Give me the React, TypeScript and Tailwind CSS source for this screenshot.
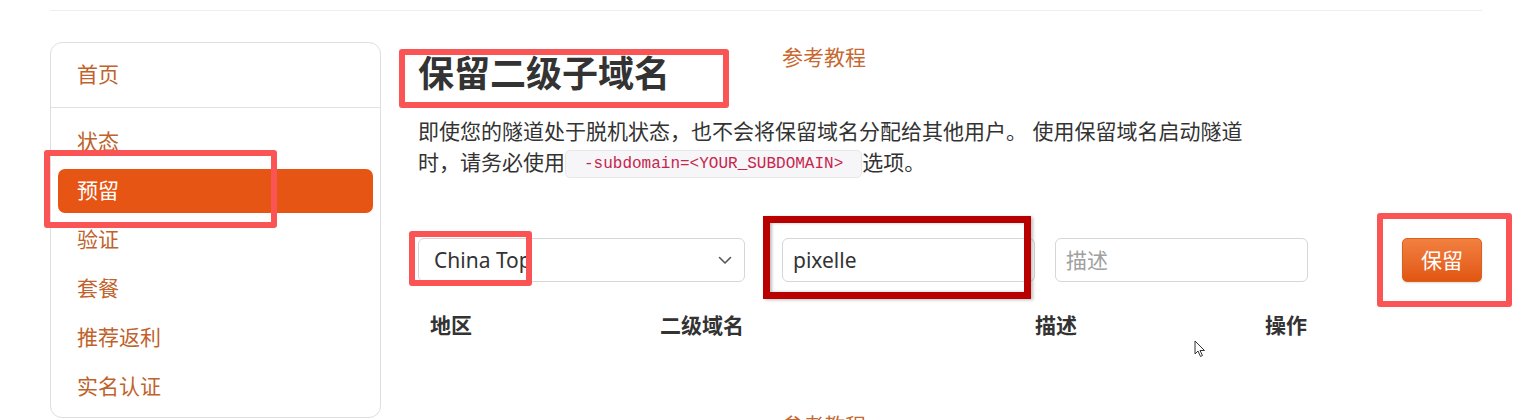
import React from "react";

const navItems = ["状态", "预留", "验证", "套餐", "推荐返利", "实名认证"];

export default function App() {
  return (
    <div
      className="relative w-[1524px] h-[420px] overflow-hidden bg-white text-[#333]"
      style={{ fontFamily: '"Noto Sans", "Noto Sans CJK SC", sans-serif' }}
    >
      <div className="pt-[10px] pl-[50px]">
        <div className="w-[1432px] border-t border-[#eeeeee]" />
      </div>

      <div className="flex pl-[50px] mt-[31px]">
        {/* Sidebar */}
        <div className="w-[331px] h-[376px] shrink-0 rounded-[12px] border border-[#dedede]">
          <div className="h-[65px] flex items-center pl-[26px] border-b border-[#e2e2e2] text-[21px] text-[#c0622b]">
            首页
          </div>
          <div className="px-[7px] pt-[9px]">
            {navItems.map((t) =>
              t === "预留" ? (
                <div
                  key={t}
                  className="h-[44px] my-[2.5px] flex items-center pl-[19px] rounded-[7px] bg-[#e75515] text-white text-[21px]"
                >
                  {t}
                </div>
              ) : (
                <div
                  key={t}
                  className="h-[49px] flex items-center pl-[19px] text-[21px] text-[#c0622b]"
                >
                  {t}
                </div>
              )
            )}
          </div>
        </div>

        {/* Main */}
        <div className="ml-[37px] w-[1064px] flex flex-col">
          <div className="flex items-start h-[74px]">
            <h1 className="w-[364px] mt-[10px] text-[36px] leading-[44px] font-bold text-[#333]">
              保留二级子域名
            </h1>
            <div className="mt-[1px] text-[21px] leading-[28px] text-[#c8672f]">参考教程</div>
          </div>

          <p className="w-[835px] text-[21px] leading-[31px] text-[#333]">
            即使您的隧道处于脱机状态，也不会将保留域名分配给其他用户。 使用保留域名启动隧道时，请务必使用
            <code
              className="inline-block align-middle px-[18px] h-[28px] leading-[26px] rounded-[5px] border border-[#e8e8ea] bg-[#f6f6f8] text-[16px] text-[#c7254e]"
              style={{ fontFamily: '"Liberation Mono", monospace' }}
            >
              -subdomain=&lt;YOUR_SUBDOMAIN&gt;
            </code>
            选项。
          </p>

          {/* Form row */}
          <div className="flex items-center mt-[60px] h-[44px]">
            <div className="w-[327px] h-[44px] flex items-center justify-between pl-[15px] pr-[12px] rounded-[6px] border border-[#d6d6d6] text-[21px] text-[#333]">
              <span>China Top</span>
              <svg width="14" height="9" viewBox="0 0 14 9" fill="none">
                <path d="M1.5 1.5 L7 7 L12.5 1.5" stroke="#555" strokeWidth="1.6" strokeLinecap="round" strokeLinejoin="round" />
              </svg>
            </div>
            <div className="ml-[37px] w-[253px] h-[44px] flex items-center pl-[10px] rounded-[6px] border border-[#d6d6d6] text-[21px] text-[#333]">
              pixelle
            </div>
            <div className="ml-[20px] w-[253px] h-[44px] flex items-center pl-[10px] rounded-[6px] border border-[#d6d6d6] text-[21px] text-[#a0a0a0]">
              描述
            </div>
            <div className="ml-auto w-[80px] h-[44px] flex items-center justify-center rounded-[5px] bg-gradient-to-b from-[#f2803f] to-[#e1560f] border border-[#d9601f] text-white text-[21px] shadow-[0_1px_2px_rgba(0,0,0,0.15)]">
              保留
            </div>
          </div>

          {/* Table header */}
          <div className="flex mt-[28px] pl-[12px] text-[21px] leading-[30px] font-bold text-[#333]">
            <div className="w-[230px]">地区</div>
            <div className="w-[375px]">二级域名</div>
            <div className="w-[230px]">描述</div>
            <div>操作</div>
          </div>

          <div className="ml-[364px] mt-[71px] text-[21px] leading-[28px] text-[#c8672f]">参考教程</div>
        </div>
      </div>

      {/* Annotation boxes */}
      <div className="absolute left-[399px] top-[49px] w-[330px] h-[59px] border-[6px] border-[#fb5454] rounded-[3px]" />
      <div className="absolute left-[44px] top-[150px] w-[233px] h-[78px] border-[6px] border-[#fb5454] rounded-[3px]" />
      <div className="absolute left-[409px] top-[231px] w-[123px] h-[55px] border-[6px] border-[#fb5454] rounded-[3px]" />
      <div className="absolute left-[763px] top-[216px] w-[268px] h-[83px] border-[7px] border-[#b80000] shadow-[inset_2px_0_3px_rgba(0,0,0,0.25),2px_1px_3px_rgba(0,0,0,0.25)]" />
      <div className="absolute left-[1377px] top-[213px] w-[135px] h-[94px] border-[6px] border-[#fb5454] rounded-[3px]" />

      {/* Mouse cursor */}
      <svg className="absolute left-[1194px] top-[340px]" width="13" height="19" viewBox="0 0 13 19">
        <path d="M1 1 L1 14 L4 11 L6.5 16.5 L8.5 15.5 L6 10.5 L10.5 10.5 Z" fill="white" stroke="#333" strokeWidth="1" strokeLinejoin="round" />
      </svg>
    </div>
  );
}
